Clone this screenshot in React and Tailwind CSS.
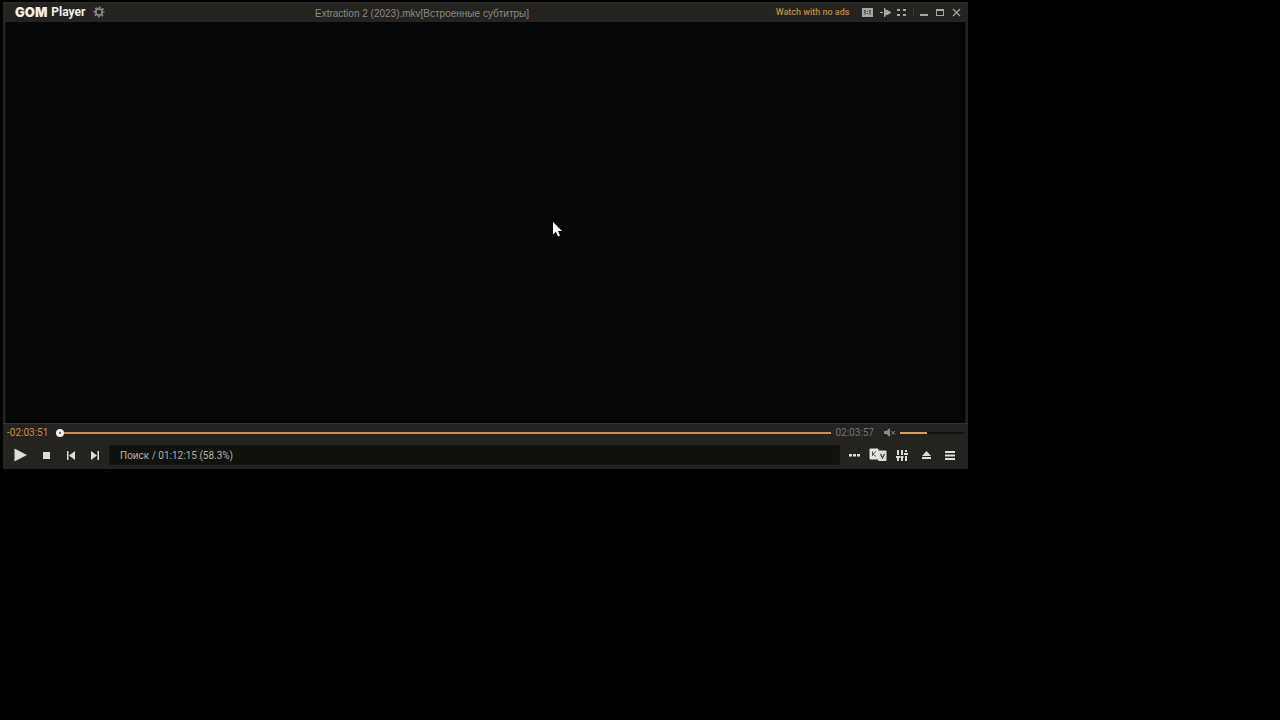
import React from "react";

function IconButton({ label, className, children }) {
  return (
    <button type="button" aria-label={label} className={`flex shrink-0 items-center justify-center ${className}`}>
      {children}
    </button>
  );
}

function Icon({ w, h, children }) {
  return (
    <svg width={w} height={h} viewBox={`0 0 ${w} ${h}`} fill="currentColor" aria-hidden="true">
      {children}
    </svg>
  );
}

function TitleBar() {
  return (
    <header className="flex h-5 items-center border-t border-[#2c2b26] bg-[#24231f] pl-3 pr-1 text-[#a7a59f]">
      <div className="flex w-[31.6%] shrink-0 items-center pb-0.5">
        <h1 className="flex items-center gap-1 text-xs leading-4 text-[#f0efea]">
          <span className="font-['Inter',sans-serif] text-[13px] font-black">GOM</span>
          <span className="font-['Roboto',sans-serif] font-bold">Player</span>
        </h1>
        <IconButton label="Settings" className="ml-1.5 size-4">
          <svg width="12" height="12" viewBox="0 0 12 12" fill="none" stroke="#8a8882" aria-hidden="true">
            <circle cx="6" cy="6" r="3.2" strokeWidth="1.7" />
            <circle cx="6" cy="6" r="4.8" strokeWidth="1.6" strokeDasharray="1.9 1.87" strokeDashoffset="0.95" />
          </svg>
        </IconButton>
      </div>
      <p className="pt-0.5 font-['Liberation_Sans',sans-serif] text-[10px] leading-4 text-[#8b8983]">
        Extraction 2 (2023).mkv[Встроенные субтитры]
      </p>
      <div className="flex flex-1 items-center justify-end pb-px">
        <a href="#no-ads" className="mr-2 font-['Roboto',sans-serif] text-[9px] font-medium leading-4 text-[#c28a35]">
          Watch with no ads
        </a>
        <IconButton label="Original size" className="h-4 w-5">
          <Icon w={11} h={9}>
            <path d="M0 0h11v9H0z" />
            <path d="M2 2h1.5v4.5H2.5V3H2zM7 2h1.5v4.5H7.5V3H7zM5 3h1v1H5zM5 5h1v1H5z" fill="#35342f" />
          </Icon>
        </IconButton>
        <IconButton label="Always on top" className="size-4">
          <Icon w={11} h={9}>
            <path d="M0 4h3v1H0zM4 0h1l1 2h1.500L11 4v1L7.500 7H6L5 9H4z" />
          </Icon>
        </IconButton>
        <IconButton label="Full screen" className="size-4">
          <Icon w={9} h={9}>
            <path d="M0 1h3v2H0zM6 1h3v2H6zM0 6h3v2H0zM6 6h3v2H6z" />
          </Icon>
        </IconButton>
        <span className="ml-1 mr-0.5 h-2 w-px bg-[#3b3a34]" />
        <IconButton label="Minimize" className="size-4">
          <Icon w={9} h={9}>
            <path d="M0 6h8v2H0z" />
          </Icon>
        </IconButton>
        <IconButton label="Maximize" className="size-4">
          <Icon w={9} h={9}>
            <path fillRule="evenodd" d="M0 1h8v7H0zM1 3v4h6V3z" />
          </Icon>
        </IconButton>
        <IconButton label="Close" className="size-4">
          <svg width="9" height="9" viewBox="0 0 9 9" stroke="currentColor" strokeWidth="1.300" aria-hidden="true">
            <path d="M1 1l7 7M8 1L1 8" />
          </svg>
        </IconButton>
      </div>
    </header>
  );
}

function SeekRow() {
  return (
    <div className="flex h-[18px] items-center pl-1 pr-1 font-['Roboto',sans-serif] text-[10px] leading-4">
      <time className="w-[49px] shrink-0 text-[#c8913f]">-02:03:51</time>
      <input
        type="range"
        min="0"
        max="7437"
        defaultValue="0"
        aria-label="Seek"
        className="h-0.5 min-w-0 flex-1 appearance-none bg-[#cc9142] outline-none [&::-webkit-slider-thumb]:size-2 [&::-webkit-slider-thumb]:appearance-none [&::-webkit-slider-thumb]:rounded-full [&::-webkit-slider-thumb]:border-[3px] [&::-webkit-slider-thumb]:border-[#f1efea] [&::-webkit-slider-thumb]:bg-[#45433c]"
      />
      <time className="ml-1 w-[49px] shrink-0 text-[#77756e]">02:03:57</time>
      <IconButton label="Unmute" className="mr-1 h-4 w-3 text-[#8f8d85]">
        <Icon w={12} h={9}>
          <path d="M0 3h2.500L6 0v9L2.500 6H0z" />
          <path d="M7.500 3l3.500 3.500M11 3L7.500 6.500" stroke="currentColor" />
        </Icon>
      </IconButton>
      <input
        type="range"
        min="0"
        max="100"
        defaultValue="42"
        aria-label="Volume"
        className="h-0.5 w-16 shrink-0 appearance-none bg-linear-to-r from-[#dca04a] from-42% to-[#11110e] to-42% outline-none [&::-webkit-slider-thumb]:appearance-none [&::-webkit-slider-thumb]:opacity-0"
      />
    </div>
  );
}

function ControlRow() {
  return (
    <div className="flex h-[27px] items-center pl-1 pr-1 text-[#dddcd8]">
      <IconButton label="Play" className="h-5 w-6.5">
        <Icon w={13} h={14}>
          <path d="M0.500 0.500l12.500 6.500L0.500 13.500z" />
        </Icon>
      </IconButton>
      <IconButton label="Stop" className="h-5 w-6.5">
        <Icon w={7} h={7}>
          <path d="M0 0h7v7H0z" />
        </Icon>
      </IconButton>
      <IconButton label="Previous" className="h-5 w-6">
        <Icon w={8} h={9}>
          <path d="M0 0h1.500v9H0zM8 0v9L2 4.500z" />
        </Icon>
      </IconButton>
      <IconButton label="Next" className="mr-0.5 h-5 w-6">
        <Icon w={8} h={9}>
          <path d="M6.500 0H8v9H6.500zM0 0l6 4.500L0 9z" />
        </Icon>
      </IconButton>
      <output className="h-5 min-w-0 flex-1 border border-[#151410] bg-[#11110d] pl-2.5 pt-0.5 font-['Roboto',sans-serif] text-[10px] leading-4 text-[#b3b1ab]">
        Поиск / 01:12:15 (58.3%)
      </output>
      <IconButton label="More" className="h-5 w-7">
        <Icon w={11} h={3}>
          <path d="M0 0h3v2.500H0zM4 0h3v2.500H4zM8 0h3v2.500H8z" />
        </Icon>
      </IconButton>
      <IconButton label="Subtitles and karaoke" className="h-5 w-5">
        <svg width="18" height="14" viewBox="0 0 18 14" aria-hidden="true">
          <rect x="9" y="2.500" width="8.500" height="10.500" rx="1" fill="#dddcd8" />
          <path d="M11.500 6l2 4 2-4" fill="none" stroke="#3b3a34" strokeWidth="1.200" />
          <rect x="0.500" y="0.500" width="9" height="11" rx="1" fill="#e6e5e1" />
          <path d="M3.500 3.500v4.500M7 3.500L4 6l3 2.500" fill="none" stroke="#55534c" />
        </svg>
      </IconButton>
      <IconButton label="Control panel" className="h-5 w-7">
        <Icon w={12} h={11}>
          <path d="M1 0h2v5H1zM1 8h2v3H1zM0 6h4v2H0zM5 0h2v5H5zM5 8h2v3H5zM4.500 6h3v2h-3zM9 0h2v2H9zM9 6h2v5H9zM8 3h4v2H8z" />
        </Icon>
      </IconButton>
      <IconButton label="Open" className="h-5 w-5">
        <Icon w={9} h={8}>
          <path d="M4.500 0L9 5H0zM0 6h9v2H0z" />
        </Icon>
      </IconButton>
      <IconButton label="Playlist" className="h-5 w-7">
        <Icon w={10} h={9}>
          <path d="M0 0h10v2H0zM0 3.500h10v2H0zM0 7h10v2H0z" />
        </Icon>
      </IconButton>
    </div>
  );
}

export default function App() {
  return (
    <div className="min-h-screen bg-black pl-[3px] pt-0.5">
      <main className="w-[75.6%] bg-[#24231f]">
        <TitleBar />
        <div className="px-0.5">
          <section aria-label="Video" className="relative aspect-[240/100] border-x border-[#151410] bg-[#060606]">
            <svg
              className="absolute left-[57%] top-1/2"
              width="10"
              height="15"
              viewBox="0 0 10 15"
              aria-hidden="true"
            >
              <path d="M0 0v12.500l3-2.700L5 14.500l2-.9-2-4.600h4z" fill="#fff" />
            </svg>
          </section>
        </div>
        <footer className="border-t border-[#34332d] bg-[#24231f]">
          <SeekRow />
          <ControlRow />
        </footer>
      </main>
    </div>
  );
}
